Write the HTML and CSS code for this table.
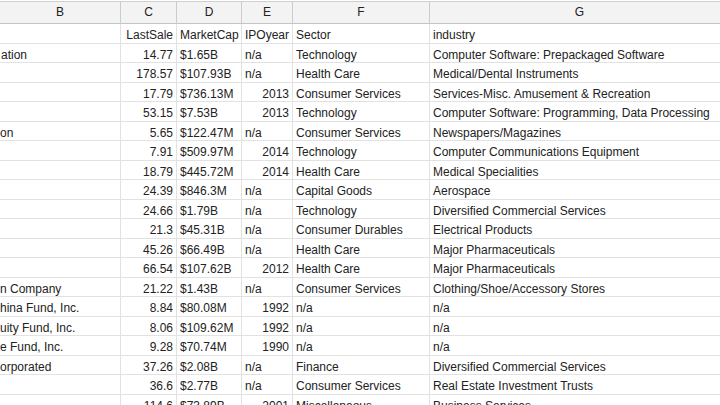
FILE: index.html
```html
<!DOCTYPE html>
<html>
<head>
<meta charset="utf-8">
<link rel="stylesheet" href="styles.css">
</head>
<body>
<div class="sheet">
  <div class="hd">B</div><div class="hd">C</div><div class="hd">D</div><div class="hd">E</div><div class="hd">F</div><div class="hd">G</div>

  <div class="c b"></div><div class="c n">LastSale</div><div class="c">MarketCap</div><div class="c">IPOyear</div><div class="c">Sector</div><div class="c">industry</div>

  <div class="c b first">ation</div><div class="c n">14.77</div><div class="c">$1.65B</div><div class="c">n/a</div><div class="c">Technology</div><div class="c">Computer Software: Prepackaged Software</div>
  <div class="c b"></div><div class="c n">178.57</div><div class="c">$107.93B</div><div class="c">n/a</div><div class="c">Health Care</div><div class="c">Medical/Dental Instruments</div>
  <div class="c b"></div><div class="c n">17.79</div><div class="c">$736.13M</div><div class="c n">2013</div><div class="c">Consumer Services</div><div class="c">Services-Misc. Amusement &amp; Recreation</div>
  <div class="c b"></div><div class="c n">53.15</div><div class="c">$7.53B</div><div class="c n">2013</div><div class="c">Technology</div><div class="c">Computer Software: Programming, Data Processing</div>
  <div class="c b">on</div><div class="c n">5.65</div><div class="c">$122.47M</div><div class="c">n/a</div><div class="c">Consumer Services</div><div class="c">Newspapers/Magazines</div>
  <div class="c b"></div><div class="c n">7.91</div><div class="c">$509.97M</div><div class="c n">2014</div><div class="c">Technology</div><div class="c">Computer Communications Equipment</div>
  <div class="c b"></div><div class="c n">18.79</div><div class="c">$445.72M</div><div class="c n">2014</div><div class="c">Health Care</div><div class="c">Medical Specialities</div>
  <div class="c b"></div><div class="c n">24.39</div><div class="c">$846.3M</div><div class="c">n/a</div><div class="c">Capital Goods</div><div class="c">Aerospace</div>
  <div class="c b"></div><div class="c n">24.66</div><div class="c">$1.79B</div><div class="c">n/a</div><div class="c">Technology</div><div class="c">Diversified Commercial Services</div>
  <div class="c b"></div><div class="c n">21.3</div><div class="c">$45.31B</div><div class="c">n/a</div><div class="c">Consumer Durables</div><div class="c">Electrical Products</div>
  <div class="c b"></div><div class="c n">45.26</div><div class="c">$66.49B</div><div class="c">n/a</div><div class="c">Health Care</div><div class="c">Major Pharmaceuticals</div>
  <div class="c b"></div><div class="c n">66.54</div><div class="c">$107.62B</div><div class="c n">2012</div><div class="c">Health Care</div><div class="c">Major Pharmaceuticals</div>
  <div class="c b">n Company</div><div class="c n">21.22</div><div class="c">$1.43B</div><div class="c">n/a</div><div class="c">Consumer Services</div><div class="c">Clothing/Shoe/Accessory Stores</div>
  <div class="c b">hina Fund, Inc.</div><div class="c n">8.84</div><div class="c">$80.08M</div><div class="c n">1992</div><div class="c">n/a</div><div class="c">n/a</div>
  <div class="c b">uity Fund, Inc.</div><div class="c n">8.06</div><div class="c">$109.62M</div><div class="c n">1992</div><div class="c">n/a</div><div class="c">n/a</div>
  <div class="c b">e Fund, Inc.</div><div class="c n">9.28</div><div class="c">$70.74M</div><div class="c n">1990</div><div class="c">n/a</div><div class="c">n/a</div>
  <div class="c b">orporated</div><div class="c n">37.26</div><div class="c">$2.08B</div><div class="c">n/a</div><div class="c">Finance</div><div class="c">Diversified Commercial Services</div>
  <div class="c b"></div><div class="c n">36.6</div><div class="c">$2.77B</div><div class="c">n/a</div><div class="c">Consumer Services</div><div class="c">Real Estate Investment Trusts</div>
  <div class="c b"></div><div class="c n">114.6</div><div class="c">$73.89B</div><div class="c n">2001</div><div class="c">Miscellaneous</div><div class="c">Business Services</div>
</div>
</body>
</html>
```

FILE: styles.css
```css
html, body {
  margin: 0;
  padding: 0;
  background: #ffffff;
  overflow: hidden;
}

.sheet {
  margin-top: 1px;
  border-top: 1px solid #cfcfcf;
  display: grid;
  grid-template-columns: 121px 56px 65px 51px 137px 300px;
  grid-template-rows: 22px;
  grid-auto-rows: 19.5px;
  font-family: "Liberation Sans", Arial, sans-serif;
  font-size: 12px;
  color: #222222;
  width: 730px;
}

.hd {
  box-sizing: border-box;
  background: #f3f3f3;
  border-right: 1px solid #cccccc;
  border-bottom: 1px solid #c4c4c4;
  text-align: center;
  line-height: 21px;
  color: #222222;
  white-space: nowrap;
}

.c {
  box-sizing: border-box;
  border-right: 1px solid #e2e2e2;
  border-bottom: 1px solid #e2e2e2;
  padding: 4px 3px 0 3px;
  line-height: 15px;
  white-space: nowrap;
  overflow: hidden;
}

.c.b {
  padding-left: 0;
}

.c.b.first {
  padding-left: 1px;
}

.c.n {
  text-align: right;
}
```
